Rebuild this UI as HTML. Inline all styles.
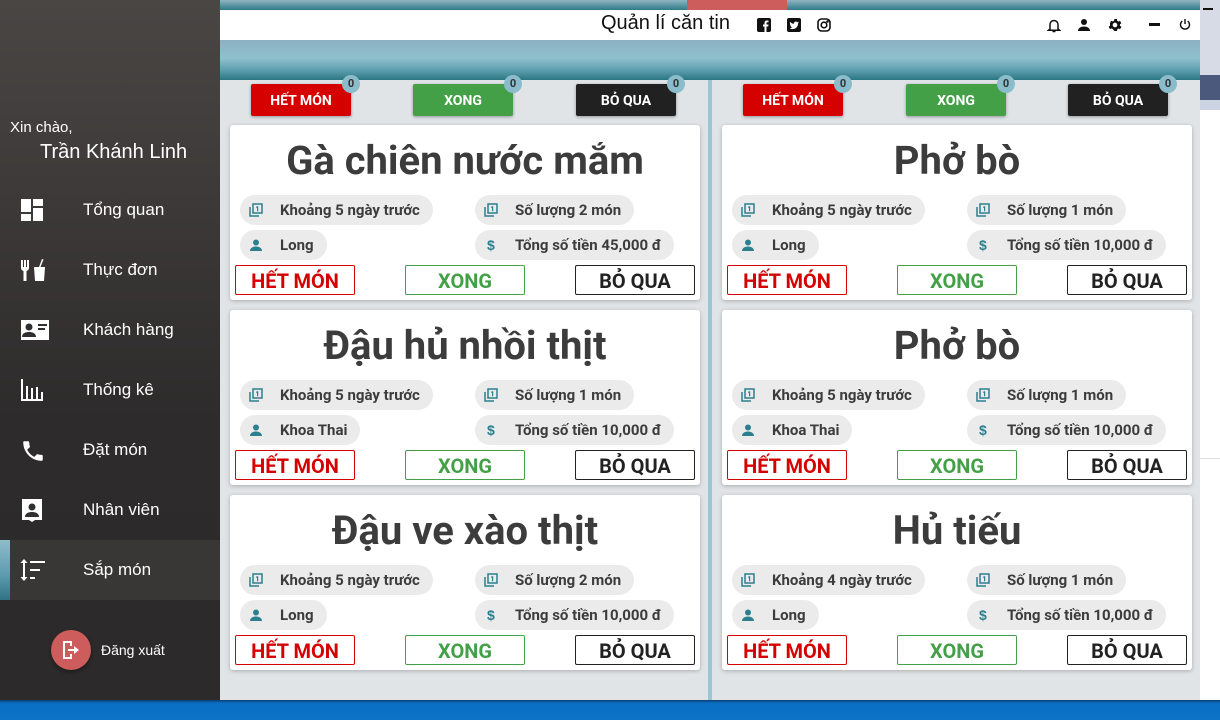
<!DOCTYPE html>
<html><head><meta charset="utf-8">
<style>
*{margin:0;padding:0;box-sizing:border-box}
body{width:1220px;height:720px;overflow:hidden;position:relative;background:#fff;font-family:"Roboto","Liberation Sans","DejaVu Sans",sans-serif}
.abs{position:absolute}
#side{left:0;top:0;width:220px;height:700px;background:linear-gradient(#4a4644,#2d2b2b 60%,#2c2a2a)}
.nav{position:absolute;left:0;width:220px;height:60px;color:#fff;font-size:17px;font-family:"Liberation Sans",sans-serif}
.nav span{position:absolute;left:83px;top:20px}
.nav svg{position:absolute;left:20px;top:18px}
#main{left:220px;top:0;width:980px;height:700px;background:#e1e4e7}
.card{position:absolute;width:470px;height:175px;background:#fff;border-radius:3px;box-shadow:0 1px 4px rgba(0,0,0,.25)}
.t{position:absolute;left:0;right:0;top:12px;text-align:center;font-size:40px;font-weight:bold;color:#3c3c3c;line-height:48px}
.chip{position:absolute;height:30px;border-radius:15px;background:#ebebeb;font-size:15px;font-weight:bold;color:#3c3c3c;line-height:30px;padding:0 13px 0 40px;white-space:nowrap}
.chip svg{position:absolute;left:9px;top:8px}
.ob{position:absolute;top:140px;width:120px;height:30px;border:1.5px solid;border-radius:2px;text-align:center;font-size:20px;font-weight:bold;line-height:31px;background:#fff}
.r{color:#d50000;border-color:#d50000}.g{color:#43a047;border-color:#43a047}.k{color:#222;border-color:#222}
.tb{position:absolute;top:84px;width:100px;height:32px;color:#fff;font-size:14px;font-weight:bold;text-align:center;line-height:34px;border-radius:2px;box-shadow:0 1px 3px rgba(0,0,0,.35)}
.badge{position:absolute;right:-9px;top:-9px;width:18px;height:18px;border-radius:50%;background:#8bbccb;color:#333;font-size:11px;line-height:18px;text-align:center}
</style></head><body>
<div class="abs" style="left:1200px;top:0;width:20px;height:75px;background:#d6dbe6"></div>
<div class="abs" style="left:1200px;top:75px;width:20px;height:25px;background:#4b5a7c"></div>
<div class="abs" style="left:1200px;top:100px;width:20px;height:10px;background:#ccd4e4"></div>
<div class="abs" style="left:1203px;top:8px;width:10px;height:2px;background:#111"></div>
<div class="abs" style="left:1200px;top:458px;width:20px;height:1px;background:#ddd"></div>
<div class="abs" style="left:0;top:700px;width:1220px;height:20px;background:linear-gradient(#0b3a6a,#0a6fc4 3px,#0b72c6)"></div>

<div id="side" class="abs">
  <div class="abs" style="left:10px;top:119px;color:#fff;font-size:15px;font-family:'Liberation Sans',sans-serif">Xin chào,</div>
  <div class="abs" style="left:40px;top:141px;color:#fff;font-size:20px;font-family:'Liberation Sans',sans-serif">Trần Khánh Linh</div>

  <div class="nav" style="top:180px"><svg width="24" height="24" viewBox="0 0 24 24" fill="#fff"><path d="M1 1h10v13H1zM13 1h10v7H13zM13 10h10v13H13zM1 16h10v7H1z"/></svg><span>Tổng quan</span></div>
  <div class="nav" style="top:240px"><svg width="26" height="24" viewBox="0 0 26 24" fill="#fff"><path d="M1 2h2v7h1V2h2v7h1V2h2v8c0 1.5-1 2.5-2.5 3V23h-3V13C2 12.5 1 11.5 1 10z"/><path d="M14 9h11l-1 14h-9z"/><path d="M19 9l3-8 1.5.5-3 7.5z"/></svg><span>Thực đơn</span></div>
  <div class="nav" style="top:300px"><svg width="30" height="24" viewBox="0 0 30 24" fill="#fff"><path d="M1 2h28v20H1z"/><circle cx="9" cy="9" r="3.5" fill="#302e2e"/><path d="M2 19c0-4 4-5 7-5s7 1 7 5z" fill="#302e2e"/><path d="M18 6h9v2h-9zM18 10h7v2h-7z" fill="#302e2e"/></svg><span>Khách hàng</span></div>
  <div class="nav" style="top:360px"><svg width="26" height="24" viewBox="0 0 26 24" fill="#fff"><path d="M1 1h2v20h3V8h2v13h3V10h2v11h3V9h2v12h3v-7h2v9H1z"/></svg><span>Thống kê</span></div>
  <div class="nav" style="top:420px"><svg width="26" height="26" viewBox="0 0 24 24" fill="#fff"><path d="M6.6 10.8c1.4 2.8 3.8 5.1 6.6 6.6l2.2-2.2c.3-.3.7-.4 1-.2 1.1.4 2.3.6 3.6.6.6 0 1 .4 1 1V20c0 .6-.4 1-1 1C10.6 21 3 13.4 3 4c0-.6.4-1 1-1h3.5c.6 0 1 .4 1 1 0 1.3.2 2.5.6 3.6.1.3 0 .7-.2 1z"/></svg><span>Đặt món</span></div>
  <div class="nav" style="top:480px"><svg width="24" height="26" viewBox="0 0 24 26" fill="#fff"><path d="M2 1h20v21h-7l-3 2-3-2H2z"/><circle cx="12" cy="9" r="3.5" fill="#302e2e"/><path d="M5 19c0-4 4-5 7-5s7 1 7 5z" fill="#302e2e"/></svg><span>Nhân viên</span></div>
  <div class="nav" style="top:540px;background:#393636"><div class="abs" style="left:0;top:0;width:10px;height:60px;background:linear-gradient(#8fbccb,#5c9aae 60%,#2d7383)"></div><svg width="26" height="24" viewBox="0 0 26 24" fill="#fff"><path d="M4 1l-3.5 4h2.5v14H.5L4 23l3.5-4H5V5h2.5z"/><path d="M10 3h15v2H10zM10 11h10v2H10zM10 19h5v2h-5z"/></svg><span>Sắp món</span></div>

  <div class="abs" style="left:51px;top:630px;width:40px;height:40px;border-radius:50%;background:#cd5c5c;box-shadow:0 2px 4px rgba(0,0,0,.4)"><svg class="abs" style="left:10px;top:10px" width="20" height="20" viewBox="0 0 20 20" fill="#fff"><path d="M2 1h9v5H9V3H4v14h5v-3h2v5H2z"/><path d="M7 9h6V6l5 4-5 4v-3H7z"/></svg></div>
  <div class="abs" style="left:101px;top:642px;color:#fff;font-size:14px;font-family:'Liberation Sans',sans-serif">Đăng xuất</div>
</div>

<div id="main" class="abs">
  <div class="abs" style="left:0;top:0;width:980px;height:10px;background:linear-gradient(#8fb5c4,#2f7a87)"></div>
  <div class="abs" style="left:467px;top:0;width:100px;height:10px;background:#cd5c5c"></div>
  <div class="abs" style="left:0;top:10px;width:980px;height:30px;background:#fff"></div>
  <div class="abs" style="left:381px;top:12px;font-size:20px;color:#111;font-family:'Liberation Sans',sans-serif">Quản lí căn tin</div>
  <svg class="abs" style="left:537px;top:18px" width="14" height="14" viewBox="0 0 14 14"><rect width="14" height="14" rx="2" fill="#111"/><path d="M9.5 14V8.5h1.7l.3-2H9.5V5.3c0-.6.2-1 1-1h1V2.6c-.3 0-.9-.1-1.6-.1-1.5 0-2.4.9-2.4 2.5v1.5H6v2h1.5V14z" fill="#fff"/></svg>
  <svg class="abs" style="left:567px;top:18px" width="14" height="14" viewBox="0 0 14 14"><rect width="14" height="14" rx="2" fill="#111"/><path d="M11.5 4.3c-.3.2-.7.3-1 .3.4-.2.6-.6.8-1-.4.2-.8.4-1.2.5a1.9 1.9 0 0 0-3.2 1.7C5.4 5.7 4 5 3.1 3.9c-.5.9-.2 2 .6 2.5-.3 0-.6-.1-.8-.2 0 .9.6 1.700 1.5 1.9-.3.1-.6.1-.9 0 .3.8 1 1.3 1.8 1.3-.8.6-1.8.9-2.8.8.9.6 1.9.9 3 .9 3.600 0 5.7-3.1 5.6-5.9.4-.3.7-.6.9-1z" fill="#fff"/></svg>
  <svg class="abs" style="left:597px;top:18px" width="14" height="14" viewBox="0 0 14 14" fill="none" stroke="#111" stroke-width="1.6"><rect x="1" y="1" width="12" height="12" rx="3.5"/><circle cx="7" cy="7" r="2.8"/><circle cx="10.5" cy="3.5" r=".5" fill="#111"/></svg>
  <svg class="abs" style="left:827px;top:18px" width="14" height="15" viewBox="0 0 14 15" fill="none" stroke="#111" stroke-width="1.5"><path d="M3 11V6.5a4 4 0 0 1 8 0V11l1.5 1.2h-11z"/><path d="M5.5 13.5h3" /></svg>
  <svg class="abs" style="left:857px;top:18px" width="14" height="14" viewBox="0 0 14 14" fill="#111"><circle cx="7" cy="4" r="3"/><path d="M1 13c0-3 3-4.5 6-4.5s6 1.5 6 4.5z"/></svg>
  <svg class="abs" style="left:887px;top:17px" width="16" height="16" viewBox="0 0 24 24" fill="#111"><path d="M19.4 13a7.5 7.5 0 0 0 0-2l2.1-1.6-2-3.5-2.5 1a7 7 0 0 0-1.7-1L15 3h-4l-.4 2.7a7 7 0 0 0-1.700 1l-2.5-1-2 3.5L4.6 11a7.5 7.5 0 0 0 0 2l-2.1 1.6 2 3.5 2.5-1a7 7 0 0 0 1.7 1L11 21h4l.4-2.7a7 7 0 0 0 1.7-1l2.5 1 2-3.5zM12 15.5a3.5 3.5 0 1 1 0-7 3.5 3.5 0 0 1 0 7z"/></svg>
  <div class="abs" style="left:929px;top:23px;width:11px;height:3px;background:#111"></div>
  <svg class="abs" style="left:959px;top:18px" width="12" height="13" viewBox="0 0 12 13" fill="none" stroke="#111" stroke-width="1.4"><path d="M6 1v5"/><path d="M3.3 3a4.5 4.5 0 1 0 5.4 0"/></svg>

  <div class="abs" style="left:0;top:40px;width:980px;height:40px;background:linear-gradient(#8cb0c2,#8fc0cd 45%,#5f9fae 75%,#2b7684)"></div>
  <div class="abs" style="left:488px;top:80px;width:4px;height:620px;background:#9cc6d6"></div>

  <div class="tb" style="left:31px;background:#d50000">HẾT MÓN<div class="badge">0</div></div>
  <div class="tb" style="left:193px;background:#43a047">XONG<div class="badge">0</div></div>
  <div class="tb" style="left:356px;background:#212121">BỎ QUA<div class="badge">0</div></div>
  <div class="tb" style="left:523px;background:#d50000">HẾT MÓN<div class="badge">0</div></div>
  <div class="tb" style="left:686px;background:#43a047">XONG<div class="badge">0</div></div>
  <div class="tb" style="left:848px;background:#212121">BỎ QUA<div class="badge">0</div></div>
</div>

<svg width="0" height="0" style="position:absolute"><defs>
<symbol id="ic1" viewBox="0 0 14 14"><path d="M1 4v9h9" fill="none" stroke="#2c7f8f" stroke-width="1.5"/><rect x="4" y="1" width="9" height="9" fill="none" stroke="#2c7f8f" stroke-width="1.5"/><path d="M8 3.3h1.2v5H8V4.6l-.9.3v-1z" fill="#2c7f8f"/></symbol>
<symbol id="ic2" viewBox="0 0 14 14"><circle cx="7" cy="4.5" r="3" fill="#2c7f8f"/><path d="M1 13c0-3 3-4.5 6-4.5s6 1.5 6 4.5z" fill="#2c7f8f"/></symbol>
</defs></svg>

<div id="cards"></div>
<script>
var data=[
[230,125,"Gà chiên nước mắm","Khoảng 5 ngày trước","Số lượng 2 món","Long","Tổng số tiền 45,000 đ"],
[230,310,"Đậu hủ nhồi thịt","Khoảng 5 ngày trước","Số lượng 1 món","Khoa Thai","Tổng số tiền 10,000 đ"],
[230,495,"Đậu ve xào thịt","Khoảng 5 ngày trước","Số lượng 2 món","Long","Tổng số tiền 10,000 đ"],
[722,125,"Phở bò","Khoảng 5 ngày trước","Số lượng 1 món","Long","Tổng số tiền 10,000 đ"],
[722,310,"Phở bò","Khoảng 5 ngày trước","Số lượng 1 món","Khoa Thai","Tổng số tiền 10,000 đ"],
[722,495,"Hủ tiếu","Khoảng 4 ngày trước","Số lượng 1 món","Long","Tổng số tiền 10,000 đ"]];
var h="";
var i1='<svg width="14" height="14"><use href="#ic1"/></svg>';
var i2='<svg width="14" height="14"><use href="#ic2"/></svg>';
var i3='<svg width="14" height="14" viewBox="0 0 14 14"><text x="3" y="12" font-size="14" font-weight="bold" fill="#2c7f8f" font-family="Liberation Sans">$</text></svg>';
data.forEach(function(d){
h+='<div class="card" style="left:'+d[0]+'px;top:'+d[1]+'px"><div class="t">'+d[2]+'</div>'+
'<div class="chip" style="left:10px;top:70px">'+i1+d[3]+'</div>'+
'<div class="chip" style="left:245px;top:70px">'+i1+d[4]+'</div>'+
'<div class="chip" style="left:10px;top:105px">'+i2+d[5]+'</div>'+
'<div class="chip" style="left:245px;top:105px">'+i3+d[6]+'</div>'+
'<div class="ob r" style="left:5px">HẾT MÓN</div><div class="ob g" style="left:175px">XONG</div><div class="ob k" style="left:345px">BỎ QUA</div></div>';
});
document.getElementById("cards").innerHTML=h;
</script>
</body></html>
